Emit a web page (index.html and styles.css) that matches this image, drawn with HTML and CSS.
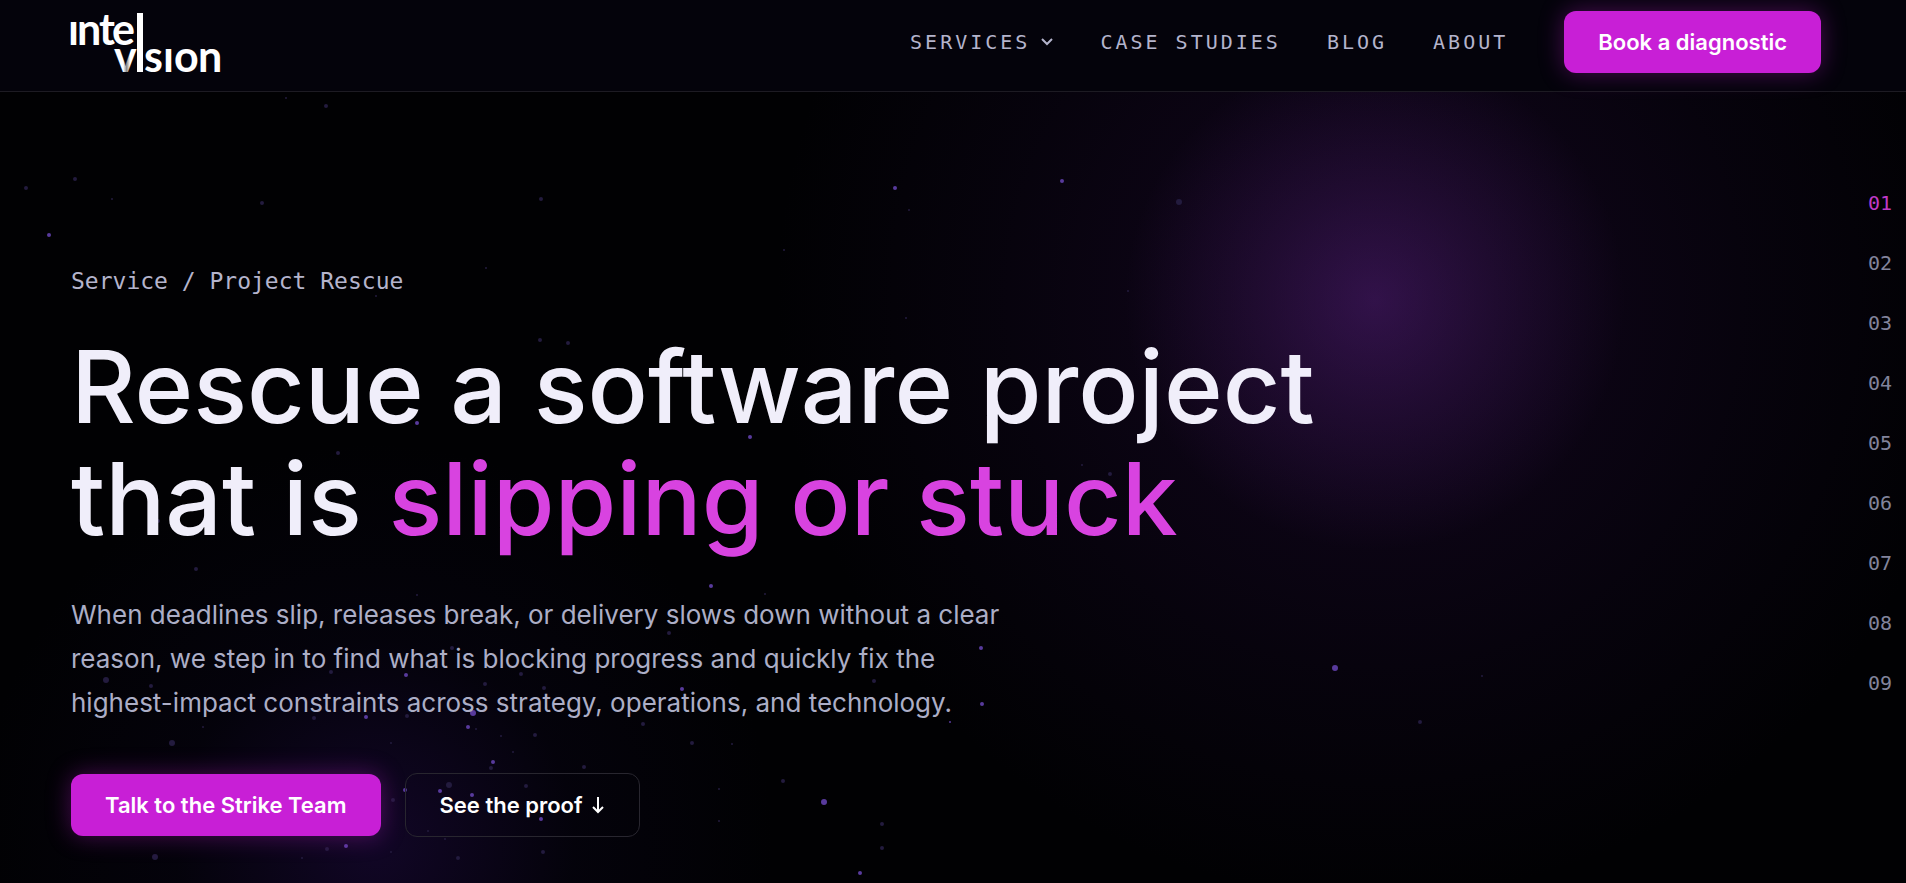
FILE: index.html
```html
<!DOCTYPE html>
<html lang="en">
<head>
    <meta charset="UTF-8">
    <meta name="viewport" content="width=device-width, initial-scale=1.0">
    <title>Project Rescue | Intelvision</title>
    <link rel="stylesheet" href="styles.css">
</head>
<body>
    <header class="header">
        <a href="#" class="logo" aria-label="Intelvision">
            <svg width="154" height="62" viewBox="0 0 154 62">
                <defs>
                    <linearGradient id="fade" x1="0" y1="0" x2="1" y2="0">
                        <stop offset="0.4" stop-color="#fff"/>
                        <stop offset="0.55" stop-color="#888"/>
                        <stop offset="0.7" stop-color="#fff"/>
                    </linearGradient>
                </defs>
                <g class="logo-text">
                    <text x="-3 6 28 41" y="34">ınte</text>
                    <text x="43" y="61" fill="url(#fade)">v</text>
                    <text x="73 92 103 127" y="61">sıon</text>
                </g>
                <rect x="66" y="2" width="6" height="59" fill="#fff"/>
            </svg>
        </a>

        <nav class="nav">
            <button type="button" class="nav-link">
                SERVICES
                <svg class="chevron" width="14" height="8" viewBox="0 0 14 8"><path d="M2 1l5 5 5-5"/></svg>
            </button>
            <a href="#" class="nav-link">CASE STUDIES</a>
            <a href="#" class="nav-link">BLOG</a>
            <a href="#" class="nav-link">ABOUT</a>
            <button type="button" class="btn btn-primary">Book a diagnostic</button>
        </nav>
    </header>

    <main class="hero">
        <!-- Particles behind the content -->
        <svg class="stars" viewBox="0 92 1906 791" preserveAspectRatio="xMidYMid slice" aria-hidden="true">
            <g class="star-dim">
                <circle cx="326" cy="106" r="2"/><circle cx="286" cy="98" r="1"/><circle cx="1179" cy="202" r="3"/>
                <circle cx="909" cy="210" r="1"/><circle cx="75" cy="179" r="2"/><circle cx="26" cy="188" r="2"/>
                <circle cx="112" cy="199" r="1"/><circle cx="262" cy="203" r="2"/><circle cx="541" cy="199" r="2"/>
                <circle cx="784" cy="250" r="1"/><circle cx="486" cy="268" r="1"/><circle cx="1128" cy="291" r="1"/>
                <circle cx="906" cy="318" r="1"/><circle cx="540" cy="340" r="2"/><circle cx="568" cy="343" r="2"/>
                <circle cx="338" cy="453" r="2"/><circle cx="1110" cy="474" r="2"/><circle cx="1082" cy="465" r="1"/>
                <circle cx="196" cy="569" r="2"/><circle cx="376" cy="296" r="1"/><circle cx="158" cy="521" r="2"/>
                <circle cx="106" cy="680" r="3"/><circle cx="151" cy="686" r="2"/><circle cx="172" cy="743" r="3"/>
                <circle cx="314" cy="718" r="2"/><circle cx="331" cy="672" r="2"/><circle cx="407" cy="716" r="2"/>
                <circle cx="476" cy="729" r="1"/><circle cx="485" cy="684" r="2"/><circle cx="491" cy="768" r="2"/>
                <circle cx="513" cy="752" r="1"/><circle cx="501" cy="736" r="1"/><circle cx="535" cy="735" r="2"/>
                <circle cx="521" cy="674" r="2"/><circle cx="544" cy="688" r="2"/><circle cx="393" cy="800" r="2"/>
                <circle cx="449" cy="785" r="3"/><circle cx="526" cy="786" r="2"/><circle cx="327" cy="849" r="2"/>
                <circle cx="155" cy="857" r="3"/><circle cx="302" cy="858" r="1"/><circle cx="391" cy="852" r="1"/>
                <circle cx="458" cy="858" r="2"/><circle cx="543" cy="852" r="2"/><circle cx="428" cy="831" r="1"/>
                <circle cx="445" cy="839" r="1"/><circle cx="391" cy="743" r="1"/><circle cx="417" cy="595" r="1"/>
                <circle cx="203" cy="727" r="1"/><circle cx="452" cy="648" r="2"/><circle cx="765" cy="594" r="1"/>
                <circle cx="669" cy="633" r="2"/><circle cx="874" cy="681" r="2"/><circle cx="643" cy="724" r="2"/>
                <circle cx="692" cy="743" r="2"/><circle cx="732" cy="744" r="1"/><circle cx="584" cy="767" r="2"/>
                <circle cx="783" cy="781" r="2"/><circle cx="719" cy="789" r="1"/><circle cx="719" cy="821" r="1"/>
                <circle cx="882" cy="824" r="2"/><circle cx="882" cy="848" r="2"/><circle cx="1420" cy="722" r="2"/>
                <circle cx="1482" cy="676" r="1"/>
            </g>
            <g class="star-bright">
                <circle cx="895" cy="188" r="2"/><circle cx="1062" cy="181" r="2"/><circle cx="49" cy="235" r="2"/>
                <circle cx="417" cy="423" r="2"/><circle cx="750" cy="437" r="2"/><circle cx="711" cy="586" r="2"/>
                <circle cx="366" cy="717" r="2"/><circle cx="406" cy="675" r="2"/><circle cx="473" cy="713" r="3"/>
                <circle cx="468" cy="727" r="2"/><circle cx="493" cy="762" r="2"/><circle cx="405" cy="790" r="2"/>
                <circle cx="440" cy="791" r="2"/><circle cx="472" cy="795" r="2"/><circle cx="541" cy="819" r="2"/>
                <circle cx="346" cy="846" r="2"/><circle cx="981" cy="648" r="2"/><circle cx="982" cy="704" r="2"/>
                <circle cx="682" cy="689" r="2"/><circle cx="950" cy="722" r="1"/><circle cx="824" cy="802" r="3"/>
                <circle cx="860" cy="873" r="2"/><circle cx="1335" cy="668" r="3"/>
            </g>
        </svg>

        <div class="hero-content">
            <p class="eyebrow">Service / Project Rescue</p>
            <h1>Rescue a software project<br>that is <span class="accent">slipping or stuck</span></h1>
            <p class="lead">When deadlines slip, releases break, or delivery slows down without a clear<br>
                reason, we step in to find what is blocking progress and quickly fix the<br>
                highest-impact constraints across strategy, operations, and technology.</p>
            <div class="actions">
                <button type="button" class="btn btn-primary">Talk to the Strike Team</button>
                <button type="button" class="btn btn-outline">See the proof
                    <svg class="arrow" width="14" height="18" viewBox="0 0 14 18"><path d="M7 1v15M2 11l5 5 5-5"/></svg>
                </button>
            </div>
        </div>

        <nav class="rail" aria-label="Sections">
            <a href="#" class="active">01</a>
            <a href="#">02</a>
            <a href="#">03</a>
            <a href="#">04</a>
            <a href="#">05</a>
            <a href="#">06</a>
            <a href="#">07</a>
            <a href="#">08</a>
            <a href="#">09</a>
        </nav>
    </main>
</body>
</html>
```
FILE: styles.css
```css
* {
    box-sizing: border-box;
}
body {
    margin: 0;
    min-height: 100vh;
    display: flex;
    flex-direction: column;
    background-color: #010103;
    color: #f0eefa;
    font-family: Inter, sans-serif;
    overflow-x: hidden;
}
a {
    color: inherit;
    text-decoration: none;
}
button {
    font-family: inherit;
    cursor: pointer;
}
.header {
    position: relative;
    z-index: 1;
    display: flex;
    justify-content: space-between;
    align-items: flex-start;
    padding: 11px 85px 18px 71px;
    background-color: #04030b;
    border-bottom: 1px solid #1d1b23;
}
.logo svg {
    display: block;
    overflow: visible;
}
.logo-text {
    font-family: Lato, sans-serif;
    font-size: 43px;
    font-weight: 700;
    fill: #fff;
}
.nav {
    display: flex;
    align-items: center;
    gap: 46px;
}
.nav-link {
    display: flex;
    align-items: center;
    gap: 10px;
    padding: 0;
    border: none;
    background: none;
    color: #b4b4cc;
    font-family: "DejaVu Sans Mono", monospace;
    font-size: 20px;
    line-height: 24px;
    letter-spacing: 3px;
}
.chevron, .arrow {
    fill: none;
    stroke: currentColor;
    stroke-width: 2;
}
.nav .btn {
    margin-left: 10px;
}
.btn {
    display: flex;
    align-items: center;
    gap: 8px;
    height: 62px;
    padding: 0 34px;
    border: none;
    border-radius: 12px;
    color: #fff;
    font-size: 22px;
    font-weight: 600;
}
.btn-primary {
    background-color: #c81fd6;
    box-shadow: 0 0 24px rgba(200, 31, 214, 0.35);
}
.btn-outline {
    height: 64px;
    background-color: transparent;
    border: 1px solid #28262f;
}

/* Hero */
.hero {
    position: relative;
    flex: 1;
    display: flex;
    justify-content: space-between;
    align-items: flex-start;
    padding: 81px 14px 46px 71px;
    background-image:
        radial-gradient(circle at 1375px 208px, rgba(112, 42, 160, 0.33), rgba(84, 32, 120, 0.25) 110px, rgba(60, 20, 90, 0) 250px),
        radial-gradient(circle at 1375px 208px, rgba(70, 20, 110, 0.26), rgba(40, 14, 70, 0.14) 380px, rgba(0, 0, 0, 0) 600px),
        radial-gradient(circle at 375px 750px, rgba(60, 20, 130, 0.28), rgba(30, 15, 80, 0.1) 200px, rgba(0, 0, 0, 0) 400px);
}
.stars {
    position: absolute;
    inset: 0;
    width: 100%;
    height: 100%;
}
.star-dim {
    fill: #231b3e;
}
.star-bright {
    fill: #583a9c;
}
.hero-content {
    position: relative;
    padding-top: 92px;
}
.eyebrow {
    margin: 0 0 34px;
    color: #b4b4cc;
    font-family: "DejaVu Sans Mono", monospace;
    font-size: 23px;
    line-height: 32px;
}
h1 {
    margin: 0 0 38px;
    font-size: 100px;
    font-weight: 500;
    line-height: 112px;
}
.accent {
    color: #d843e0;
}
.lead {
    margin: 0 0 48px;
    color: #acaec6;
    font-size: 26px;
    line-height: 44px;
}
.actions {
    display: flex;
    align-items: center;
    gap: 24px;
}
.rail {
    position: relative;
    display: flex;
    flex-direction: column;
    color: #82849c;
    font-family: "DejaVu Sans Mono", monospace;
    font-size: 20px;
    line-height: 60px;
}
.rail .active {
    color: #c03ac8;
}
```
